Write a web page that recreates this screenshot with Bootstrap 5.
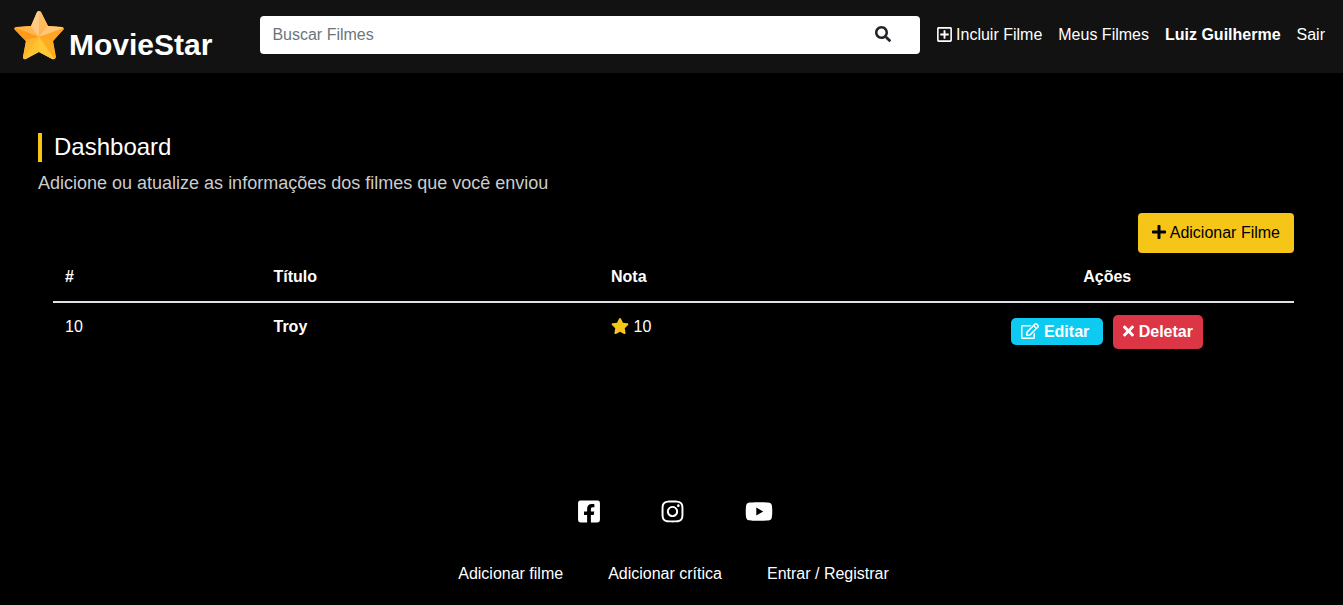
<!DOCTYPE html>
<html lang="pt-br">
<head>
<meta charset="utf-8">
<meta name="viewport" content="width=device-width, initial-scale=1">
<title>MovieStar</title>
<link href="https://cdn.jsdelivr.net/npm/bootstrap@5.3.0/dist/css/bootstrap.min.css" rel="stylesheet">
<style>
body { background: #000; color: #fff; font-family: "Liberation Sans", Arial, sans-serif; font-size: 16px; line-height: 24px; }
svg { fill: currentColor; }
.site-header { background: #121212; padding: 8px 10px 10px 14px; }
.brand-name { font-size: 30px; line-height: 36px; margin: 17px 0 0 5px; padding-top: 2px; }
.brand-link { margin-right: 48px; }
.search-box { background: #fff; border-radius: 4px; height: 38px; }
.search-box .form-control { background: transparent; border: 0; color: #212529; padding: 6px 12px; box-shadow: none; }
.search-box .form-control::placeholder { color: #6c757d; }
.search-box .btn { color: #212529; border: 0; width: 76px; padding: 0 4px 4px 0; }
.site-header .nav-link { color: #fff; padding: 7px 8px; }
.site-header .navbar-nav { margin-left: 9px; }
.nav-icon { width: 16px; height: 16px; }
.page-body { padding: 60px 49px 0 38px; }
.section-title { font-size: 24px; line-height: 1.2; border-left: 4px solid #f5c518; padding-left: 12px; margin-bottom: 8px; }
.section-description { font-size: 18px; line-height: 27px; color: #ccc; margin-bottom: 16px; }
.card-btn { background: #f5c518; color: #000; border: 0; border-radius: 4px; padding: 8px 14px; line-height: 24px; }
.card-btn:hover { background: #d7ad15; }
.table-area { padding-left: 15px; }
.movies-table { --bs-table-bg: transparent; --bs-table-color: #fff; color: #fff; margin: 0; table-layout: fixed; }
.movies-table th, .movies-table td { padding: 12px; border: 0; color: #fff; }
.movies-table thead { border-bottom: 2px solid #dee2e6; }
.col-id { width: 16.8%; }
.col-title { width: 27.2%; }
.col-rate { width: 25.9%; }
.movies-table a { color: #fff; text-decoration: none; }
.rate-icon { fill: #f5c518; }
.row-actions { gap: 10px; }
.edit-btn { background: #0dcaf0; border-radius: 5px; padding: 2px 14px 1px 10px; margin-bottom: 1px; }
.delete-btn { background: #dc3545; color: #fff; border: 0; border-radius: 5px; padding: 5px 10px; font-weight: 700; }
.site-footer { padding: 138px 0 20px 4px; }
.site-footer a { color: #fff; text-decoration: none; }
.social-list { gap: 61px; margin-bottom: 38px; padding-left: 3px; }
.footer-links { gap: 45px; }
</style>
</head>
<body>
<header>
  <nav class="site-header navbar navbar-expand-lg align-items-start">
    <a class="brand-link d-flex align-items-start text-white text-decoration-none" href="#">
      <svg width="50" height="53" viewBox="0 0 50 53" aria-hidden="true">
        <defs>
          <linearGradient id="gTop" x1="0" y1="0" x2="0" y2="1"><stop offset="0" stop-color="#ffc474"/><stop offset="1" stop-color="#ffb347"/></linearGradient>
          <linearGradient id="gLow" x1="0" y1="0" x2="0" y2="1"><stop offset="0" stop-color="#ffa928"/><stop offset="1" stop-color="#ffc832"/></linearGradient>
          <clipPath id="starShape"><path d="M23 4Q25 2 27 4L34 18L48 19Q51 20 49 22L39 33L42 49Q41 52 38 51L25 44L12 51Q9 52 9 49L12 33L1 22Q-1 20 2 19L17 18Z"/></clipPath>
        </defs>
        <g clip-path="url(#starShape)">
          <path fill="url(#gLow)" d="M0 0h50v53H0z"/>
          <path fill="#ffca85" d="M25 0L15 18L25 29Z"/>
          <path fill="url(#gTop)" d="M25 0L35 18L25 29Z"/>
          <path fill="#ffb64b" d="M0 20L16 17L25 29Z"/>
          <path fill="#ff9b19" d="M0 19L25 29L11 34Z"/>
          <path fill="#ffc676" d="M34 17L51 19L25 29Z"/>
          <path fill="#ffa329" d="M51 20L39 34L25 29Z"/>
          <path fill="#ffb52c" d="M25 29L11 32L8 53Z"/>
          <path fill="#ffc230" d="M25 29L8 53L25 44Z"/>
          <path fill="#ffca36" d="M25 29L25 45L42 53Z"/>
          <path fill="#ffac20" d="M25 29L42 53L39 32Z"/>
        </g>
      </svg>
      <span class="brand-name fw-bold">MovieStar</span>
    </a>
    <form class="search-box d-flex flex-grow-1 mt-2" role="search">
      <input class="form-control" type="search" placeholder="Buscar Filmes" aria-label="Buscar Filmes">
      <button class="btn" type="button" aria-label="Buscar"><svg class="nav-icon" viewBox="0 0 512 512"><path d="M505 442.700L405.300 343c-4.500-4.500-10.600-7-17-7H372c27.600-35.300 44-79.700 44-128C416 93.100 322.900 0 208 0S0 93.100 0 208s93.100 208 208 208c48.300 0 92.700-16.400 128-44v16.300c0 6.400 2.500 12.500 7 17l99.700 99.700c9.400 9.400 24.600 9.400 33.900 0l28.300-28.300c9.400-9.400 9.400-24.600.1-34zM208 336c-70.700 0-128-57.200-128-128 0-70.700 57.200-128 128-128 70.700 0 128 57.200 128 128 0 70.700-57.200 128-128 128z"/></svg></button>
    </form>
    <ul class="navbar-nav mt-2">
      <li class="nav-item"><a class="nav-link" href="#"><svg width="15" height="17" viewBox="0 0 448 512" class="align-text-top" aria-hidden="true"><path d="M352 240v32c0 6.600-5.400 12-12 12h-88v88c0 6.600-5.400 12-12 12h-32c-6.600 0-12-5.400-12-12v-88h-88c-6.600 0-12-5.400-12-12v-32c0-6.600 5.400-12 12-12h88v-88c0-6.600 5.400-12 12-12h32c6.600 0 12 5.400 12 12v88h88c6.600 0 12 5.400 12 12zm96-160v352c0 26.500-21.500 48-48 48H48c-26.500 0-48-21.500-48-48V80c0-26.500 21.500-48 48-48h352c26.500 0 48 21.500 48 48zm-48 346V86c0-3.300-2.700-6-6-6H54c-3.300 0-6 2.700-6 6v340c0 3.300 2.700 6 6 6h340c3.300 0 6-2.700 6-6z"/></svg> Incluir Filme</a></li>
      <li class="nav-item"><a class="nav-link" href="#">Meus Filmes</a></li>
      <li class="nav-item"><a class="nav-link fw-bold" href="#">Luiz Guilherme</a></li>
      <li class="nav-item"><a class="nav-link" href="#">Sair</a></li>
    </ul>
  </nav>
</header>

<main class="page-body">
  <h2 class="section-title fw-normal">Dashboard</h2>
  <p class="section-description">Adicione ou atualize as informações dos filmes que você enviou</p>
  <div class="d-flex justify-content-end">
    <a class="card-btn btn" href="#"><svg width="14" height="16" viewBox="0 0 448 512" class="align-text-top" aria-hidden="true"><path d="M416 208H272V64c0-17.700-14.300-32-32-32h-32c-17.700 0-32 14.300-32 32v144H32c-17.700 0-32 14.300-32 32v32c0 17.700 14.300 32 32 32h144v144c0 17.700 14.300 32 32 32h32c17.700 0 32-14.300 32-32V304h144c17.700 0 32-14.300 32-32v-32c0-17.700-14.300-32-32-32z"/></svg> Adicionar Filme</a>
  </div>
  <div class="table-area">
    <table class="movies-table table">
      <thead>
        <tr><th class="col-id" scope="col">#</th><th class="col-title" scope="col">Título</th><th class="col-rate" scope="col">Nota</th><th class="text-center" scope="col">Ações</th></tr>
      </thead>
      <tbody>
        <tr>
          <td>10</td>
          <td><a class="fw-bold" href="#">Troy</a></td>
          <td><svg width="18" height="16" viewBox="0 0 576 512" class="rate-icon align-text-top" aria-hidden="true"><path d="M259.300 17.800L194 150.200 47.900 171.500c-26.200 3.800-36.700 36.100-17.700 54.600l105.700 103-25 145.500c-4.500 26.300 23.200 46 46.400 33.700L288 439.600l130.700 68.700c23.200 12.200 50.900-7.400 46.400-33.700l-25-145.500 105.700-103c19-18.500 8.500-50.800-17.700-54.600L382 150.200 316.700 17.800c-11.700-23.600-45.600-23.900-57.400 0z"/></svg> 10</td>
          <td>
            <div class="row-actions d-flex justify-content-center align-items-center">
              <a class="edit-btn fw-bold" href="#"><svg width="18" height="16" viewBox="0 0 576 512" class="align-text-top" aria-hidden="true"><path d="M402.300 344.900l32-32c5-5 13.700-1.500 13.700 5.700V464c0 26.500-21.500 48-48 48H48c-26.500 0-48-21.500-48-48V112c0-26.500 21.500-48 48-48h273.500c7.100 0 10.700 8.600 5.700 13.700l-32 32c-1.500 1.500-3.500 2.300-5.700 2.300H48v352h352V350.500c0-2.100.8-4.100 2.300-5.600zm156.600-201.800L296.300 405.700l-90.400 10c-26.200 2.900-48.500-19.200-45.600-45.600l10-90.400L432.900 17.100c22.900-22.900 59.900-22.900 82.700 0l43.200 43.200c22.900 22.900 22.900 60 .1 82.800zM460.100 174L402 115.900 216.200 301.800l-7.300 65.300 65.300-7.300L460.100 174zm64.800-79.700l-43.200-43.200c-4.100-4.100-10.800-4.100-14.800 0L436 82l58.100 58.100 30.900-30.900c4-4.200 4-10.800-.1-14.900z"/></svg> Editar</a>
              <form class="d-flex"><button class="delete-btn" type="button"><svg width="11" height="16" viewBox="0 0 352 512" class="align-text-top" aria-hidden="true"><path d="M242.700 256l100.100-100.100c12.300-12.300 12.300-32.200 0-44.500l-22.200-22.200c-12.300-12.300-32.200-12.300-44.500 0L176 189.300 75.900 89.200c-12.300-12.300-32.200-12.300-44.500 0L9.200 111.500c-12.300 12.300-12.300 32.200 0 44.500L109.300 256 9.200 356.100c-12.300 12.300-12.300 32.200 0 44.500l22.200 22.200c12.300 12.300 32.200 12.300 44.500 0L176 322.700l100.100 100.100c12.300 12.300 32.200 12.300 44.500 0l22.200-22.200c12.300-12.300 12.300-32.200 0-44.500L242.700 256z"/></svg> Deletar</button></form>
            </div>
          </td>
        </tr>
      </tbody>
    </table>
  </div>
</main>

<footer class="site-footer">
  <ul class="social-list list-unstyled d-flex justify-content-center">
    <li><a class="d-block" href="#" aria-label="Facebook"><svg class="d-block" width="22" height="25" viewBox="0 0 448 512"><path d="M400 32H48A48 48 0 0 0 0 80v352a48 48 0 0 0 48 48h137.300V327.700h-63V256h63v-54.600c0-62.200 37-96.500 93.700-96.500 27.100 0 55.500 4.800 55.500 4.800v61h-31.300c-30.800 0-40.400 19.100-40.400 38.700V256h68.800l-11 71.700h-57.800V480H400a48 48 0 0 0 48-48V80a48 48 0 0 0-48-48z"/></svg></a></li>
    <li><a class="d-block" href="#" aria-label="Instagram"><svg class="d-block" width="23" height="25" viewBox="0 0 448 512"><path d="M224.100 141c-63.600 0-114.900 51.300-114.900 114.900s51.300 114.900 114.900 114.900S339 319.500 339 255.900 287.700 141 224.100 141zm0 189.600c-41.100 0-74.700-33.500-74.700-74.700s33.500-74.700 74.700-74.700 74.700 33.500 74.700 74.700-33.600 74.700-74.700 74.700zm146.400-194.300c0 14.900-12 26.800-26.800 26.800-14.900 0-26.800-12-26.800-26.800s12-26.800 26.800-26.800 26.800 12 26.800 26.800zm76.100 27.200c-1.700-35.900-9.900-67.700-36.200-93.900-26.200-26.200-58-34.400-93.900-36.200-37-2.100-147.900-2.100-184.900 0-35.800 1.700-67.600 9.900-93.900 36.100s-34.400 58-36.200 93.900c-2.100 37-2.100 147.900 0 184.900 1.700 35.900 9.900 67.700 36.200 93.900s58 34.400 93.900 36.200c37 2.100 147.900 2.100 184.900 0 35.900-1.700 67.700-9.900 93.900-36.200 26.200-26.200 34.400-58 36.200-93.900 2.100-37 2.100-147.800 0-184.800zM398.800 388c-7.800 19.600-22.900 34.700-42.600 42.600-29.500 11.700-99.500 9-132.100 9s-102.700 2.600-132.100-9c-19.600-7.800-34.700-22.900-42.600-42.600-11.700-29.500-9-99.500-9-132.100s-2.600-102.700 9-132.100c7.800-19.600 22.900-34.700 42.600-42.600 29.500-11.700 99.500-9 132.100-9s102.700-2.600 132.100 9c19.600 7.800 34.700 22.900 42.600 42.600 11.700 29.500 9 99.500 9 132.100s2.700 102.700-9 132.100z"/></svg></a></li>
    <li><a class="d-block" href="#" aria-label="YouTube"><svg class="d-block" width="28" height="25" viewBox="0 0 576 512"><path d="M549.700 124.100c-6.300-23.700-24.800-42.300-48.300-48.600C458.800 64 288 64 288 64S117.200 64 74.600 75.500c-23.500 6.300-42 24.900-48.300 48.600-11.400 42.900-11.400 132.300-11.400 132.300s0 89.400 11.400 132.300c6.300 23.700 24.800 41.500 48.300 47.800C117.200 448 288 448 288 448s170.800 0 213.400-11.500c23.500-6.300 42-24.200 48.300-47.800 11.400-42.900 11.400-132.300 11.400-132.300s0-89.400-11.400-132.300zm-317.500 213.500V175.200l142.700 81.200-142.700 81.200z"/></svg></a></li>
  </ul>
  <ul class="footer-links list-unstyled d-flex justify-content-center mb-0">
    <li><a href="#">Adicionar filme</a></li>
    <li><a href="#">Adicionar crítica</a></li>
    <li><a href="#">Entrar / Registrar</a></li>
  </ul>
</footer>
<script src="https://cdn.jsdelivr.net/npm/bootstrap@5.3.0/dist/js/bootstrap.bundle.min.js"></script>
</body>
</html>
